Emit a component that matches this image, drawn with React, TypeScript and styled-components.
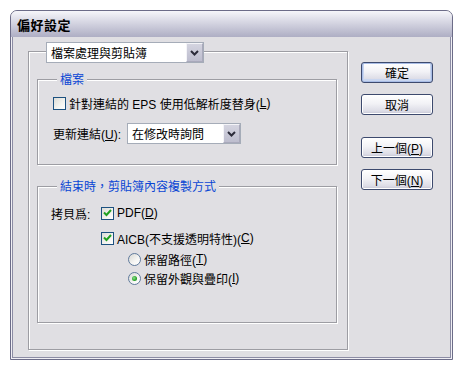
import styled, { createGlobalStyle } from "styled-components";

const GlobalStyle = createGlobalStyle`
  html, body { margin: 0; padding: 0; background: #ffffff; }
  body {
    font-family: "Liberation Sans", "Noto Sans CJK TC", sans-serif;
    font-size: 12px;
    color: #000;
  }
  u { text-underline-offset: 1px; }
`;

const Window = styled.div`
  box-sizing: border-box;
  width: 443px;
  height: 350px;
  margin: 10px 0 0 10px;
  border: 1px solid #6c6c88;
  border-radius: 7px 7px 0 0;
  background: #e0dfe3;
  display: flex;
  flex-direction: column;
  overflow: hidden;
`;

const TitleBar = styled.div`
  height: 26px;
  flex: none;
  display: flex;
  align-items: center;
  padding-left: 6px;
  background: linear-gradient(#f6f6fa 0%, #dcdce7 35%, #c3c3d4 70%, #aeaec4 100%);
  font-family: "Noto Sans CJK TC", sans-serif;
  font-weight: bold;
  font-size: 13px;
  letter-spacing: 0.5px;
`;

const BodyEdge = styled.div`
  flex: 1;
  display: flex;
  border: solid #f0eff4;
  border-width: 0 1px 1px 1px;
`;

const Body = styled.div`
  flex: 1;
  display: flex;
  align-items: flex-start;
  border: solid #8c8ca4;
  border-width: 0 1px 1px 1px;
  padding-left: 15px;
`;

const Frame = styled.div`
  box-sizing: border-box;
  width: 320px;
  margin-top: 14px;
  padding: 0 0 26px 8px;
  border: 1px solid #9d9da3;
  box-shadow: inset 1px 1px 0 #fff, 1px 1px 0 #fff;
`;

const Combo = styled.div<{ $w: number }>`
  box-sizing: border-box;
  width: ${(p) => p.$w}px;
  height: 21px;
  display: flex;
  border: 1px solid #a5acb8;
  background: #fff;
`;

const ComboText = styled.div`
  flex: 1;
  display: flex;
  align-items: center;
  padding-left: 3px;
  margin: 1px;
  white-space: nowrap;
`;

const ComboButton = styled.div`
  box-sizing: border-box;
  width: 17px;
  display: flex;
  align-items: center;
  justify-content: center;
  background: linear-gradient(#d4d4e0, #bdbdce);
  border: 1px solid #f4f4f8;
  border-right-color: #a9a9bb;
  border-bottom-color: #a9a9bb;
`;

const HeaderCombo = styled(Combo)`
  margin: -10px 0 0 9px;
`;

const Group = styled.div<{ $top: number }>`
  box-sizing: border-box;
  width: 300px;
  margin-top: ${(p) => p.$top}px;
  border: 1px solid #9d9da3;
  box-shadow: inset 1px 1px 0 #fff, 1px 1px 0 #fff;
`;

const Legend = styled.div`
  width: fit-content;
  margin: -8px 0 0 19px;
  padding: 0 3px;
  line-height: 14px;
  background: #e0dfe3;
  color: #0a46d4;
  font-family: "Noto Sans CJK TC", sans-serif;
`;

const GroupBody = styled.div<{ $pad: string }>`
  display: flex;
  flex-direction: column;
  padding: ${(p) => p.$pad};
`;

const Row = styled.div<{ $top?: number; $indent?: number }>`
  display: flex;
  align-items: center;
  height: 16px;
  margin-top: ${(p) => p.$top ?? 0}px;
  padding-left: ${(p) => p.$indent ?? 0}px;
  white-space: nowrap;
`;

const Label = styled.span<{ $w?: number }>`
  display: inline-block;
  width: ${(p) => (p.$w ? `${p.$w}px` : "auto")};
  margin-right: 3px;
`;

const Box = styled.span`
  box-sizing: border-box;
  width: 13px;
  height: 13px;
  flex: none;
  margin-right: 3px;
  border: 1px solid #1c5180;
  background: linear-gradient(135deg, #dcdcd7 0%, #f4f4f0 60%, #ffffff 100%);
  display: flex;
  align-items: center;
  justify-content: center;
`;

const Round = styled.span`
  box-sizing: border-box;
  width: 13px;
  height: 13px;
  flex: none;
  margin-right: 3px;
  border: 1px solid #5f7a9c;
  border-radius: 50%;
  background: linear-gradient(135deg, #d8d8d4 0%, #f6f6f4 60%, #ffffff 100%);
  display: flex;
  align-items: center;
  justify-content: center;
`;

const Dot = styled.span`
  width: 5px;
  height: 5px;
  border-radius: 50%;
  background: radial-gradient(circle at 40% 40%, #8ee08e 0%, #29a329 60%, #1e8a1e 100%);
`;

const Buttons = styled.div`
  display: flex;
  flex-direction: column;
  margin: 25px 0 0 13px;
`;

const Button = styled.button<{ $gap?: number; $default?: boolean }>`
  box-sizing: border-box;
  width: 72px;
  height: 21px;
  margin-top: ${(p) => p.$gap ?? 0}px;
  padding: 0;
  border: 1px solid #3d4a6e;
  border-radius: 3px;
  background: linear-gradient(#ffffff 0%, #f2f2f6 45%, #dcdce6 85%, #c2c2d2 100%);
  box-shadow: ${(p) =>
    p.$default ? "inset 0 0 0 1px #a9bde6, inset 0 -1px 0 2px #c9d6f0" : "inset 0 0 0 1px #ffffff"};
  font-family: "Liberation Sans", "Noto Sans CJK TC", sans-serif;
  font-size: 12px;
  color: #000;
`;

function Chevron() {
  return (
    <svg width="9" height="6" viewBox="0 0 9 6">
      <polyline points="1,1 4.5,4.5 8,1" fill="none" stroke="#2b2b3a" strokeWidth="2" />
    </svg>
  );
}

function Check({ on }: { on?: boolean }) {
  return (
    <Box>
      {on && (
        <svg width="9" height="8" viewBox="0 0 9 8">
          <polyline points="1,3.5 3.5,6 8,1" fill="none" stroke="#21a121" strokeWidth="2" />
        </svg>
      )}
    </Box>
  );
}

function Radio({ on }: { on?: boolean }) {
  return <Round>{on && <Dot />}</Round>;
}

export default function App() {
  return (
    <>
      <GlobalStyle />
      <Window>
        <TitleBar>偏好設定</TitleBar>
        <BodyEdge>
          <Body>
            <Frame>
              <HeaderCombo $w={158}>
                <ComboText>檔案處理與剪貼簿</ComboText>
                <ComboButton>
                  <Chevron />
                </ComboButton>
              </HeaderCombo>

              <Group $top={16}>
                <Legend>檔案</Legend>
                <GroupBody $pad="9px 0 20px 15px">
                  <Row>
                    <Check />
                    針對連結的 EPS 使用低解析度替身(<u>L</u>)
                  </Row>
                  <Row $top={12} style={{ height: 21 }}>
                    <Label $w={71}>
                      更新連結(<u>U</u>):
                    </Label>
                    <Combo $w={114}>
                      <ComboText>在修改時詢問</ComboText>
                      <ComboButton>
                        <Chevron />
                      </ComboButton>
                    </Combo>
                  </Row>
                </GroupBody>
              </Group>

              <Group $top={21}>
                <Legend>結束時，剪貼簿內容複製方式</Legend>
                <GroupBody $pad="12px 0 36px 13px">
                  <Row>
                    <Label $w={47}>拷貝爲:</Label>
                    <Check on />
                    PDF(<u>D</u>)
                  </Row>
                  <Row $top={9} $indent={50}>
                    <Check on />
                    AICB(不支援透明特性)(<u>C</u>)
                  </Row>
                  <Row $top={5} $indent={77}>
                    <Radio />
                    保留路徑(<u>T</u>)
                  </Row>
                  <Row $top={3} $indent={77}>
                    <Radio on />
                    保留外觀與疊印(<u>I</u>)
                  </Row>
                </GroupBody>
              </Group>
            </Frame>

            <Buttons>
              <Button $default>確定</Button>
              <Button $gap={11}>取消</Button>
              <Button $gap={22}>
                上一個(<u>P</u>)
              </Button>
              <Button $gap={11}>
                下一個(<u>N</u>)
              </Button>
            </Buttons>
          </Body>
        </BodyEdge>
      </Window>
    </>
  );
}
